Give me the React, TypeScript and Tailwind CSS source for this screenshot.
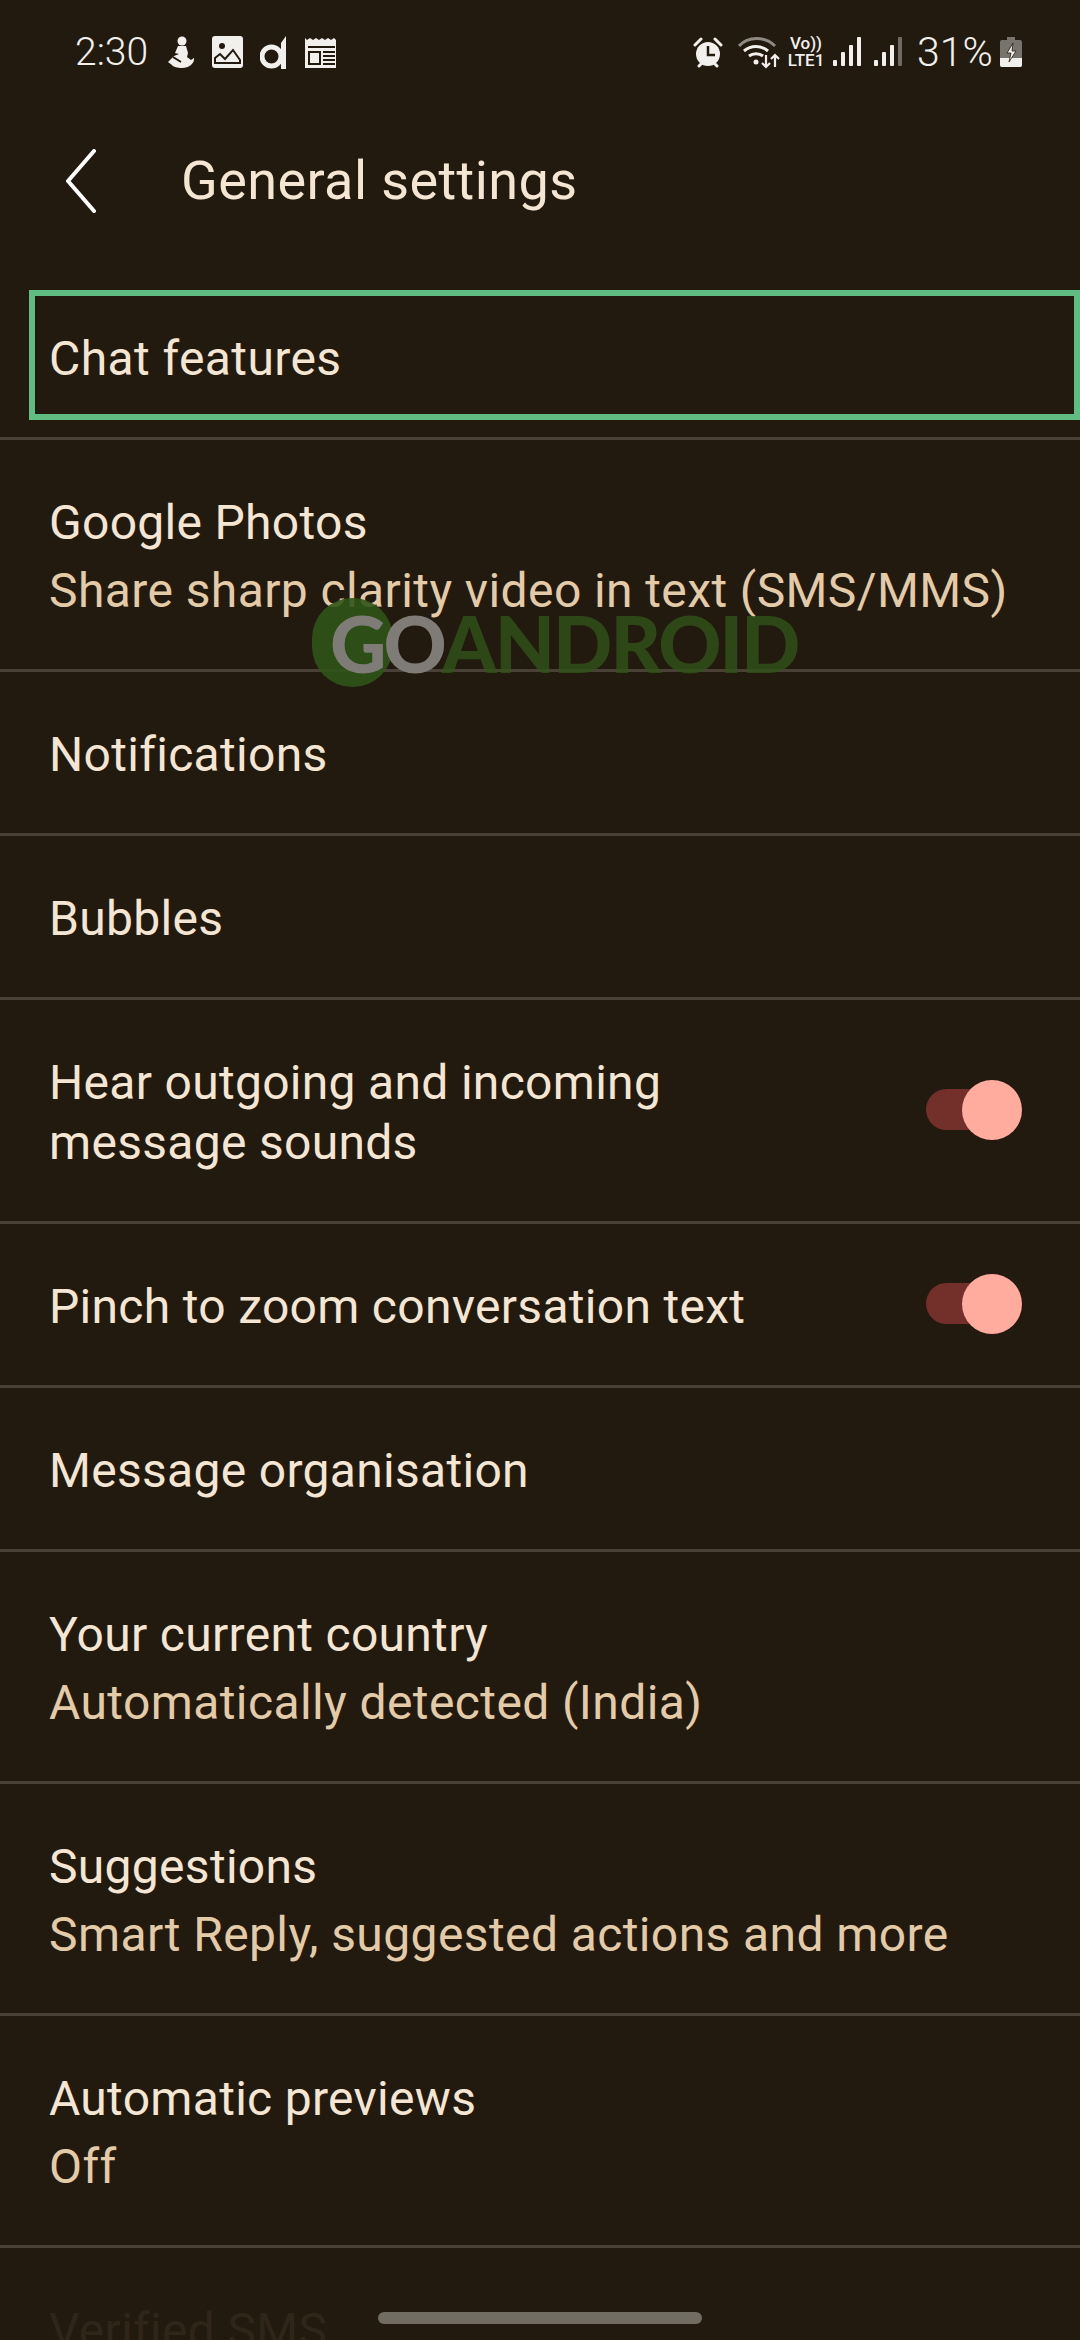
const font = "font-['Roboto','Liberation_Sans',sans-serif]";

type Row = { title: string; lines?: string[]; sub?: string; toggle?: boolean };

const rows: Row[] = [
  { title: 'Google Photos', sub: 'Share sharp clarity video in text (SMS/MMS)' },
  { title: 'Notifications' },
  { title: 'Bubbles' },
  { title: 'Hear outgoing and incoming', lines: ['message sounds'], toggle: true },
  { title: 'Pinch to zoom conversation text', toggle: true },
  { title: 'Message organisation' },
  { title: 'Your current country', sub: 'Automatically detected (India)' },
  { title: 'Suggestions', sub: 'Smart Reply, suggested actions and more' },
  { title: 'Automatic previews', sub: 'Off' },
];

function Toggle() {
  return (
    <div className="relative h-[60px] w-[96px] shrink-0 -translate-y-[3px]">
      <div className="absolute left-0 top-[9px] h-[41px] w-[70px] rounded-full bg-[#73302a]" />
      <div className="absolute right-0 top-0 h-[60px] w-[60px] rounded-full bg-[#ffac9f]" />
    </div>
  );
}

function Figure() {
  return (
    <svg width="28" height="33" viewBox="0 0 28 33" fill="#f2f0ec">
      <circle cx="15" cy="5" r="4.5" />
      <path d="M11 10l8 0 2 7-1 4 4 3 3-2c1 5-5 10-12 10-4 0-9-1-10-3l-4-3 6-6 5-2-4-1z" />
      <path d="M6 21l8 5" stroke="#231a0f" strokeWidth="2" />
    </svg>
  );
}

function ImageIcon() {
  return (
    <svg width="31" height="32" viewBox="0 0 31 32">
      <rect width="31" height="32" rx="3" fill="#f2f0ec" />
      <circle cx="10" cy="10" r="3" fill="#231a0f" />
      <path d="M3 22l5-4 5 5 8-9 7 10v3H3z" fill="none" stroke="#231a0f" strokeWidth="2" />
    </svg>
  );
}

function DIcon() {
  return (
    <svg width="27" height="33" viewBox="0 0 27 33" fill="none">
      <circle cx="11.5" cy="20.5" r="9.5" stroke="#f2f0ec" strokeWidth="5" />
      <path d="M21 33V7l5-7v33z" fill="#f2f0ec" />
    </svg>
  );
}

function NewsIcon() {
  return (
    <svg width="33" height="31" viewBox="0 0 33 31">
      <path d="M0 1l2 2 3-2 3 2 3-2 3 2 3-2 3 2 3-2 3 2 3-2 2 2V31H0z" fill="#f2f0ec" />
      <rect x="3" y="9" width="27" height="2" fill="#231a0f" />
      <rect x="3" y="14" width="13" height="14" fill="#231a0f" />
      <rect x="5" y="16" width="9" height="10" fill="#f2f0ec" />
      <path d="M18 15h12M18 19h12M18 23h12M18 27h12" stroke="#231a0f" strokeWidth="2" />
    </svg>
  );
}

function Alarm() {
  return (
    <svg width="30" height="31" viewBox="0 0 30 31">
      <circle cx="15" cy="17" r="12" fill="#f2f0ec" />
      <path d="M2 8l6-6M28 8l-6-6M6 29l3-3M24 29l-3-3" stroke="#f2f0ec" strokeWidth="3" strokeLinecap="round" />
      <path d="M15 9v9h7" fill="none" stroke="#231a0f" strokeWidth="2.5" />
    </svg>
  );
}

function Wifi() {
  return (
    <svg width="42" height="33" viewBox="0 0 42 33" fill="none">
      <path d="M1 10C10 0 27 0 37 10" stroke="#8d8a84" strokeWidth="3" />
      <path d="M6 15c7-6 17-6 24 0M11 20c4-3 10-3 14 0" stroke="#f2f0ec" strokeWidth="3" />
      <circle cx="18" cy="26" r="2.5" fill="#f2f0ec" />
      <path d="M28 19v12M24 27l4 4 4-4M37 31V19M33 23l4-4 4 4" stroke="#f2f0ec" strokeWidth="2.2" />
    </svg>
  );
}

function Signal({ dim }: { dim?: boolean }) {
  return (
    <svg width="28" height="30" viewBox="0 0 28 30" fill="#f2f0ec">
      <rect x="0" y="23" width="4" height="6" rx="1" />
      <rect x="8" y="15" width="4" height="14" rx="1" />
      <rect x="16" y="8" width="4" height="21" rx="1" />
      <rect x="24" y="0" width="4" height="29" rx="1" fill={dim ? '#6f6b64' : '#f2f0ec'} />
    </svg>
  );
}

function Battery() {
  return (
    <svg width="22" height="30" viewBox="0 0 22 30">
      <path d="M7 0h8v3h5a2 2 0 0 1 2 2v23a2 2 0 0 1-2 2H2a2 2 0 0 1-2-2V5a2 2 0 0 1 2-2h5z" fill="#77746e" />
      <path d="M0 21h22v7a2 2 0 0 1-2 2H2a2 2 0 0 1-2-2z" fill="#f2f0ec" />
      <path d="M13 6l-6 10h4l-2 9 7-11h-4z" fill="#f2f0ec" stroke="#231a0f" strokeWidth="0.8" />
    </svg>
  );
}

function Watermark() {
  return (
    <div className="absolute left-[312px] top-[598px] h-[90px] w-[490px]">
      <div className="absolute left-0 top-0 h-[89px] w-[81px] rounded-full bg-[#2f5418]/90" />
      <div className="absolute left-[18px] top-[2px] flex h-[86px] items-center font-['Lato',sans-serif] text-[78px] font-black tracking-[-3px] text-[#7f7c78]">
        GO
      </div>
      <div className="absolute left-[130px] top-[2px] flex h-[86px] items-center font-['Lato',sans-serif] text-[78px] font-black tracking-[-2px] text-[#2f5418]/80">
        ANDROID
      </div>
    </div>
  );
}

export default function App() {
  return (
    <div className={`relative h-[2340px] w-[1080px] overflow-hidden bg-[#231a0f] ${font}`}>
      {/* status bar */}
      <div className="flex h-[104px] items-center justify-between pl-[75px] pr-[58px] text-[#f2f0ec]">
        <div className="flex items-center">
          <span className="w-[92px] text-[39px] font-light leading-none">2:30</span>
          <Figure />
          <span className="ml-[17px]"><ImageIcon /></span>
          <span className="ml-[17px]"><DIcon /></span>
          <span className="ml-[18px]"><NewsIcon /></span>
        </div>
        <div className="flex items-center">
          <Alarm />
          <span className="ml-[15px]"><Wifi /></span>
          <div className="ml-[7px] flex w-[38px] flex-col items-center text-[17px] font-medium leading-[17px]">
            <span>Vo))</span>
            <span>LTE1</span>
          </div>
          <span className="ml-[8px]"><Signal /></span>
          <span className="ml-[13px]"><Signal dim /></span>
          <span className="ml-[15px] w-[83px] text-[41px] font-light leading-none">31%</span>
          <Battery />
        </div>
      </div>

      {/* title */}
      <div className="mb-[32px] flex h-[154px] items-center pl-[66px]">
        <svg width="30" height="64" viewBox="0 0 30 64" fill="none">
          <path d="M28 2L2 32l26 30" stroke="#ffffff" strokeWidth="4" strokeLinecap="round" strokeLinejoin="round" />
        </svg>
        <h1 className="mb-[2px] ml-[85px] text-[54px] font-normal tracking-[0.4px] text-[#f5e6d3]">General settings</h1>
      </div>

      <div className="border-b-[3px] border-[#4a4136] pb-[17px] pl-[29px]">
        <div className="flex h-[130px] items-center border-[6px] border-[#60bc80] pl-[14px] pt-[8px] text-[48px] tracking-[0.4px] text-[#f5e6d3]">
          Chat features
        </div>
      </div>

      {rows.map((row) => (
        <div key={row.title} className="flex items-center justify-between border-b-[3px] border-[#4a4136] pb-[48px] pl-[49px] pr-[58px] pt-[53px]">
          <div>
            <div className="text-[48px] leading-[60px] tracking-[0.3px] text-[#f5e6d3]">{row.title}</div>
            {row.lines?.map((line) => (
              <div key={line} className="text-[48px] leading-[60px] tracking-[0.3px] text-[#f5e6d3]">{line}</div>
            ))}
            {row.sub && <div className="mt-[8px] text-[48px] leading-[60px] tracking-[0.4px] text-[#e3cba8]">{row.sub}</div>}
          </div>
          {row.toggle && <Toggle />}
        </div>
      ))}

      <div className="pl-[49px] pt-[53px] text-[48px] leading-[60px] tracking-[0.3px] text-[#2f2619]">Verified SMS</div>

      <Watermark />

      <div className="absolute left-[378px] top-[2312px] h-[12px] w-[324px] rounded-full bg-[#716d62]" />
    </div>
  );
}
